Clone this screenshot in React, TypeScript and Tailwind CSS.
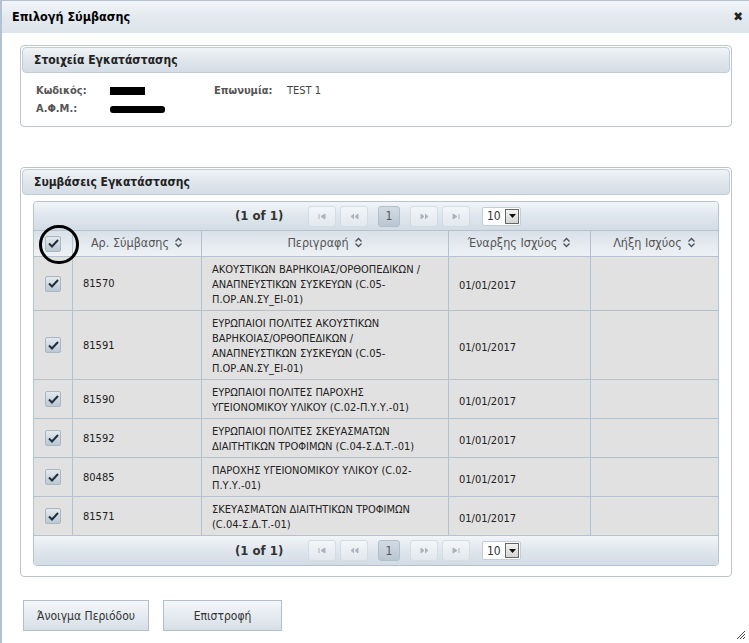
const font = { fontFamily: '"DejaVu Sans Condensed", "DejaVu Sans", sans-serif' };

type Row = { code: string; lines: string[] };

const rows: Row[] = [
  { code: "81570", lines: ["ΑΚΟΥΣΤΙΚΩΝ ΒΑΡΗΚΟΙΑΣ/ΟΡΘΟΠΕΔΙΚΩΝ /", "ΑΝΑΠΝΕΥΣΤΙΚΩΝ ΣΥΣΚΕΥΩΝ (C.05-", "Π.ΟΡ.ΑΝ.ΣΥ_ΕΙ-01)"] },
  { code: "81591", lines: ["ΕΥΡΩΠΑΙΟΙ ΠΟΛΙΤΕΣ ΑΚΟΥΣΤΙΚΩΝ", "ΒΑΡΗΚΟΙΑΣ/ΟΡΘΟΠΕΔΙΚΩΝ /", "ΑΝΑΠΝΕΥΣΤΙΚΩΝ ΣΥΣΚΕΥΩΝ (C.05-", "Π.ΟΡ.ΑΝ.ΣΥ_ΕΙ-01)"] },
  { code: "81590", lines: ["ΕΥΡΩΠΑΙΟΙ ΠΟΛΙΤΕΣ ΠΑΡΟΧΗΣ", "ΥΓΕΙΟΝΟΜΙΚΟΥ ΥΛΙΚΟΥ (C.02-Π.Υ.Υ.-01)"] },
  { code: "81592", lines: ["ΕΥΡΩΠΑΙΟΙ ΠΟΛΙΤΕΣ ΣΚΕΥΑΣΜΑΤΩΝ", "ΔΙΑΙΤΗΤΙΚΩΝ ΤΡΟΦΙΜΩΝ (C.04-Σ.Δ.Τ.-01)"] },
  { code: "80485", lines: ["ΠΑΡΟΧΗΣ ΥΓΕΙΟΝΟΜΙΚΟΥ ΥΛΙΚΟΥ (C.02-", "Π.Υ.Υ.-01)"] },
  { code: "81571", lines: ["ΣΚΕΥΑΣΜΑΤΩΝ ΔΙΑΙΤΗΤΙΚΩΝ ΤΡΟΦΙΜΩΝ", "(C.04-Σ.Δ.Τ.-01)"] },
];

const CheckBox = () => (
  <div className="w-[16px] h-[16px] border border-[#a9b7c4] rounded-[2px] bg-gradient-to-b from-[#e4e9ee] to-[#bcc7d2] flex items-center justify-center">
    <svg width="11" height="9" viewBox="0 0 11 9">
      <path d="M1 4.5 L4 7.5 L10 1" fill="none" stroke="#1f2f3f" strokeWidth="2" />
    </svg>
  </div>
);

const SortIcon = () => (
  <svg width="9" height="11" viewBox="0 0 9 11" className="inline-block ml-[5px] -mt-[2px]">
    <path d="M1.5 4.5 L4.5 1.5 L7.5 4.5 M1.5 6.5 L4.5 9.5 L7.5 6.5" fill="none" stroke="#4a5560" strokeWidth="1.4" />
  </svg>
);

// pager glyphs: bar + arrow heads, drawn faint because buttons are disabled
const glyphs: Record<string, string> = {
  first: "M1 1 V6 M7 1 L3 3.5 L7 6 Z",
  prev: "M4 1 L1 3.5 L4 6 M8 1 L5 3.5 L8 6 Z",
  next: "M1 1 L4 3.5 L1 6 Z M5 1 L8 3.5 L5 6",
  last: "M1 1 L5 3.5 L1 6 Z M7 1 V6",
};

const PagerBtn = ({ kind }: { kind: string }) => (
  <div className="w-[28px] h-[21px] border border-[#d3dbe3] rounded-[3px] bg-gradient-to-b from-[#f3f6f9] to-[#e2e8ee] flex items-center justify-center">
    <svg width="9" height="7" viewBox="0 0 9 7">
      <path d={glyphs[kind]} fill="#aab4be" stroke="#aab4be" strokeWidth="1" />
    </svg>
  </div>
);

const Paginator = ({ bottom }: { bottom?: boolean }) => (
  <div className={`flex items-center bg-gradient-to-b from-[#f2f5f8] via-[#dfe6ed] to-[#d3dce5] ${bottom ? "h-[30px] rounded-b-[4px] border-t border-[#b4c2d0]" : "h-[28px] rounded-t-[4px]"}`}>
    <span className="ml-[201px] w-[50px] font-bold text-[13px] text-[#333]">(1 of 1)</span>
    <div className="ml-[23px] flex items-center gap-[4px]">
      <PagerBtn kind="first" />
      <PagerBtn kind="prev" />
    </div>
    <div className="ml-[10px] w-[22px] h-[21px] rounded-[3px] border border-[#b2bfcc] bg-gradient-to-b from-[#d2dbe4] to-[#bac6d2] flex items-center justify-center text-[12px] text-[#555]">1</div>
    <div className="ml-[10px] flex items-center gap-[4px]">
      <PagerBtn kind="next" />
      <PagerBtn kind="last" />
    </div>
    <div className="ml-[12px] w-[39px] h-[19px] border border-[#c4ccd4] rounded-[2px] bg-white flex items-center">
      <span className="flex-1 pl-[4px] text-[12px] text-[#333]">10</span>
      <div className="w-[14px] h-[15px] mr-[1px] border border-[#666] bg-gradient-to-b from-[#f4f4f4] to-[#d4d4d4] flex items-center justify-center">
        <svg width="7" height="4" viewBox="0 0 7 4"><path d="M0 0 H7 L3.5 4 Z" fill="#111" /></svg>
      </div>
    </div>
  </div>
);

const PanelHeader = ({ title }: { title: string }) => (
  <div className="mx-[1px] mt-[1px] h-[26px] rounded-[4px] border border-[#c3ccd5] bg-gradient-to-b from-[#f1f4f7] via-[#e0e6ec] to-[#d5dde5] flex items-center pl-[11px]">
    <span className="font-bold text-[12px] text-[#222]">{title}</span>
  </div>
);

export default function App() {
  return (
    <div style={font} className="relative w-[749px] h-[643px] overflow-hidden bg-white border-l-2 border-t border-[#b4c1ce]">
      <div className="h-[32px] bg-gradient-to-b from-[#f2f5f8] via-[#e3e9ef] to-[#dde4eb] flex items-center justify-between pl-[10px] pr-[6px]">
        <span className="mt-[1px] font-bold text-[12.5px] text-black">Επιλογή Σύμβασης</span>
        <span className="text-[13px] font-bold text-[#222]">✖</span>
      </div>

      <div className="pl-[18px] pr-[17px] pt-[12px]">
        <div className="h-[82px] rounded-[4px] border border-[#bcc5ce]">
          <PanelHeader title="Στοιχεία Εγκατάστασης" />
          <div className="pl-[15px] pt-[9px] text-[11px] leading-[18px]">
            <div className="flex items-center">
              <span className="w-[74px] font-bold text-[#555]">Κωδικός:</span>
              <span className="w-[35px] h-[8px] bg-black" />
              <span className="ml-[69px] w-[73px] font-bold text-[#555]">Επωνυμία:</span>
              <span className="text-[#444]">TEST 1</span>
            </div>
            <div className="flex items-center">
              <span className="w-[74px] font-bold text-[#555]">Α.Φ.Μ.:</span>
              <span className="w-[55px] h-[7px] bg-black rounded-[3px]" />
            </div>
          </div>
        </div>

        <div className="mt-[40px] h-[410px] rounded-[4px] border border-[#bcc5ce]">
          <PanelHeader title="Συμβάσεις Εγκατάστασης" />
          <div className="mx-[12px] mt-[6px] border border-[#b4c2d0] rounded-[4px]">
            <Paginator />
            <div className="grid grid-cols-[39px_129px_247px_142px_1fr] text-[12.5px] text-[#555] h-[26px] border-t border-[#b4c2d0] bg-gradient-to-b from-[#d9e1e9] to-[#eef2f5]">
              <div className="flex items-center justify-center border-r border-[#b4c2d0]">
                <CheckBox />
              </div>
              <div className="flex items-center justify-center border-r border-[#b4c2d0]">Αρ. Σύμβασης<SortIcon /></div>
              <div className="flex items-center justify-center border-r border-[#b4c2d0]">Περιγραφή<SortIcon /></div>
              <div className="flex items-center justify-center border-r border-[#b4c2d0]">Έναρξης Ισχύος<SortIcon /></div>
              <div className="flex items-center justify-center">Λήξη Ισχύος<SortIcon /></div>
            </div>
            {rows.map((r) => (
              <div key={r.code} className="grid grid-cols-[39px_129px_247px_142px_1fr] text-[11px] text-[#222] leading-[15px] bg-[#e1e1e1] border-t border-[#b4c2d0]">
                <div className="flex items-center justify-center border-r border-[#b4c2d0]">
                  <CheckBox />
                </div>
                <div className="flex items-center pl-[10px] border-r border-[#b4c2d0]">{r.code}</div>
                <div className="pt-[5px] pb-[3px] pl-[10px] border-r border-[#b4c2d0]">
                  {r.lines.map((l, i) => (
                    <div key={i}>{l}</div>
                  ))}
                </div>
                <div className="flex items-center pl-[10px] pt-[4px] border-r border-[#b4c2d0]">01/01/2017</div>
                <div />
              </div>
            ))}
            <Paginator bottom />
          </div>
        </div>

        <div className="mt-[23px] ml-[3px] flex gap-[14px] text-[12px] text-[#333]">
          <div className="w-[126px] h-[31px] border border-[#b4bfca] bg-gradient-to-b from-[#f4f7fa] to-[#d7dfe7] flex items-center justify-center">Άνοιγμα Περιόδου</div>
          <div className="w-[119px] h-[31px] border border-[#b4bfca] bg-gradient-to-b from-[#f4f7fa] to-[#d7dfe7] flex items-center justify-center">Επιστροφή</div>
        </div>
      </div>

      <div className="absolute left-[37px] top-[224px] w-[40px] h-[39px] rounded-full border-[3px] border-black" />

      <svg width="10" height="10" viewBox="0 0 10 10" className="absolute right-[3px] bottom-[3px]">
        <path d="M9 1 L1 9 M9 4 L4 9 M9 7 L7 9" stroke="#444" strokeWidth="1" />
      </svg>
    </div>
  );
}
